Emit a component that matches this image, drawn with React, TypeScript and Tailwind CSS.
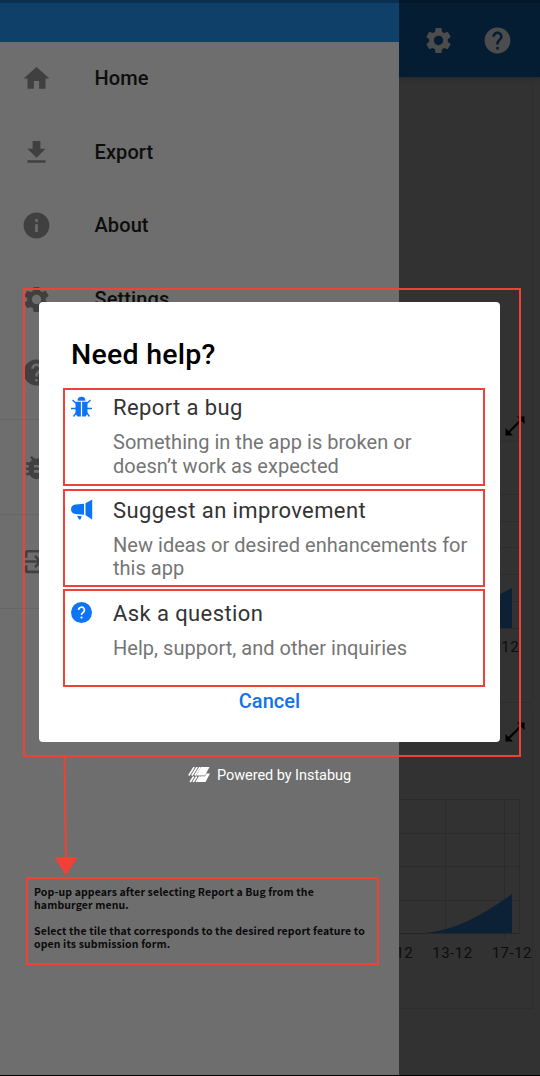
import type { ReactNode } from "react";
import {
  MdHome,
  MdFileDownload,
  MdInfo,
  MdSettings,
  MdHelp,
  MdBugReport,
  MdExitToApp,
} from "react-icons/md";

const menu = [
  { label: "Home", Icon: MdHome },
  { label: "Export", Icon: MdFileDownload },
  { label: "About", Icon: MdInfo },
  { label: "Settings", Icon: MdSettings },
];

function Drawer() {
  return (
    <aside className="flex h-[1075px] w-[399px] shrink-0 flex-col bg-[#6e6e6e]">
      <div className="h-[42px] border-t-[3px] border-[#0b2f4e] bg-[#0f406a]" />
      <nav className="flex flex-col">
        {menu.map(({ label, Icon }) => (
          <div key={label} className="flex h-[73.5px] items-center gap-[42.5px] pl-[21px]">
            <Icon className="size-[31px] shrink-0 text-[#404040]" />
            <span className="pb-px text-[20px] font-medium tracking-[0.1px] text-[#0d0d0d]">{label}</span>
          </div>
        ))}
        <div className="flex h-[73.5px] items-center pl-[21px]">
          <MdHelp className="size-[31px] text-[#404040]" />
        </div>
      </nav>
      <div className="mt-[9.5px] flex h-[95px] items-center border-t border-[#666666] pl-[21px]">
        <MdBugReport className="size-[31px] text-[#404040]" />
      </div>
      <div className="flex h-[95px] items-center border-y border-[#666666] pl-[21px]">
        <MdExitToApp className="size-[31px] text-[#404040]" />
      </div>
    </aside>
  );
}

function ExpandIcon() {
  return (
    <svg viewBox="0 0 20 20" className="size-5 fill-black stroke-black">
      <path d="M3 17 17 3" strokeWidth="2.2" />
      <path d="M12 0.5h7.5v7.5zM0.5 12v7.5H8z" stroke="none" />
    </svg>
  );
}

function Page() {
  return (
    <main className="flex h-[1075px] w-[141px] flex-col overflow-hidden bg-[#323232]">
      <header className="flex h-[77px] shrink-0 items-center gap-7 border-t-[3px] border-[#03172a] bg-[#041d33] pl-6 shadow-[0_2px_4px_#292929]">
        <MdSettings className="size-[31px] text-[#4c4c4c]" />
        <MdHelp className="size-[31px] text-[#4c4c4c]" />
      </header>
      <section className="mr-[7px] h-[626px] shrink-0 border-r border-b border-[#2d2d2d] pt-[339px]">
        <div className="flex h-[24px] items-start justify-end pr-[7px]">
          <ExpandIcon />
        </div>
        <svg viewBox="0 0 121 198" className="block h-[198px] w-[121px]">
          <path d="M0 1H121M0 54.5H121M0 81.5H121M0 107.5H121M0 134.5H121M0 161.5H121" stroke="#2d2d2d" />
          <path d="M60 188V180Q95 157 113 148V188z" fill="#0c2136" />
          <path d="M0 188.5H121" stroke="#282828" />
        </svg>
        <div className="flex justify-end pr-[13px] text-[15px] leading-[18px] tracking-[0.4px] text-[#0d0d0d]">12</div>
      </section>
      <section className="mt-[3px] mr-[7px] h-[303px] shrink-0 border-r border-b border-[#2d2d2d] pt-[16px]">
        <div className="flex justify-end pr-[7px]">
          <ExpandIcon />
        </div>
        <svg viewBox="0 0 121 145" className="mt-[57px] block h-[145px] w-[121px]">
          <path d="M0 .5H121M0 34.5H121M0 67.5H121M0 101.5H121M46.5 0V139M105.5 0V139M120.5 0V134" stroke="#2b2b2b" />
          <path d="M20 134.500C52 132 75 122 113 95V134z" fill="#0c2136" />
          <path d="M0 134.500H121" stroke="#262626" />
        </svg>
        <div className="flex w-[133px] justify-end gap-[19px] text-[15px] leading-[18px] tracking-[0.5px] whitespace-nowrap text-[#0d0d0d]">
          <span>12</span>
          <span>13-12</span>
          <span>17-12</span>
        </div>
      </section>
    </main>
  );
}

function BugIcon() {
  return (
    <svg viewBox="0 0 22 22" className="block size-[22px]" fill="#0d75f5">
      <path d="M6.500 4.800a4 4 0 0 1 8 0z" />
      <path d="M4.500 5.800H9.900V20.500H6.500C5 19 4.500 17.500 4.500 15zM11.100 5.800H16.500V15C16.500 17.500 16 19 14.500 20.500H11.100z" />
      <path d="M1.500 4 5 7.200M19.500 4 16 7.200M0 12.500H5M16 12.500h5M5.500 16.500 2.500 20.500M15.500 16.500l3 4" fill="none" stroke="#0d75f5" strokeWidth="1.400" />
    </svg>
  );
}

function MegaphoneIcon() {
  return (
    <svg viewBox="0 0 22 22" className="block size-[22px]" fill="#0d75f5">
      <path d="M4.500 5.500 13 4.800V15.800L4.500 15C1.500 14.800 0 12.800 0 10.200S1.500 5.700 4.500 5.500z" />
      <path d="M14.500 4.300 21.200.5V20.500L14.500 16.200z" />
      <path d="M6 16.800 10.800 17.200 9.500 20.500H8z" />
    </svg>
  );
}

function QuestionIcon() {
  return (
    <svg viewBox="0 0 22 22" className="block size-[22px]">
      <circle cx="10.500" cy="10.500" r="10.500" fill="#0d75f5" />
      <path d="M7.600 8.100A2.900 2.900 0 1 1 12 10.500C10.900 11.200 10.500 11.700 10.500 13" fill="none" stroke="white" strokeWidth="1.600" />
      <circle cx="10.500" cy="15.500" r="1.100" fill="white" />
    </svg>
  );
}

interface OptionProps {
  icon: ReactNode;
  title: string;
  inset: string;
  children: ReactNode;
}

function Option({ icon, title, inset, children }: OptionProps) {
  return (
    <button className={`flex h-[98px] w-[422px] gap-[20px] border-2 border-[#f04037] pl-[6px] text-left ${inset}`}>
      <span className="w-[22px] shrink-0">{icon}</span>
      <span className="flex flex-col gap-[11px] whitespace-nowrap">
        <span className="text-[22px] leading-[24px] tracking-[0.4px] text-[#333333]">{title}</span>
        <span className="text-[20px] leading-[23.5px] tracking-[0.03px] text-[#757575]">{children}</span>
      </span>
    </button>
  );
}

export default function App() {
  return (
    <div className="relative flex h-[1076px] w-[540px] overflow-hidden bg-black font-['Roboto',sans-serif]">
      <Drawer />
      <Page />

      <div role="dialog" className="absolute top-[302px] left-[39px] flex h-[440px] w-[461px] flex-col rounded-[4px] bg-white">
        <h1 className="pt-[37px] pl-[32px] text-[28.500px] leading-[32px] font-medium tracking-[0.25px] text-black">Need help?</h1>
        <div className="mt-[17px] ml-[24px] flex flex-col gap-[2.500px]">
          <Option icon={<BugIcon />} title="Report a bug" inset="pt-[6px]">
            Something in the app is broken or
            <br />
            doesn’t work as expected
          </Option>
          <Option icon={<MegaphoneIcon />} title="Suggest an improvement" inset="pt-[8px]">
            New ideas or desired enhancements for
            <br />
            this app
          </Option>
          <Option icon={<QuestionIcon />} title="Ask a question" inset="pt-[11px]">
            Help, support, and other inquiries
          </Option>
        </div>
        <button className="mt-[2px] text-center text-[20px] leading-[24px] font-medium tracking-[0.05px] text-[#1373e6]">Cancel</button>
      </div>

      <div className="absolute top-[288px] left-[23px] h-[469px] w-[498px] border-2 border-[#f04037]" />

      <div className="absolute top-[766px] left-[188px] flex h-[18px] items-center gap-[7px] text-white">
        <svg viewBox="0 0 22 16" className="h-4 w-[22px]" fill="white">
          <path d="M13 0H21.500L17 8.500H8z" />
          <path d="M.800 8.500 6.200 0M3.800 8.500 9.200 0M6.800 8.500 12 0" stroke="white" strokeWidth="1.600" />
          <path d="M12.500 9.300H17L18.500 6.500H22L17.500 15H9z" />
          <path d="M2.200 15 5.700 9.500M5.200 15 8.700 9.500M8.200 15l3.500-5.500" stroke="white" strokeWidth="1.600" />
        </svg>
        <span className="pt-[2px] text-[14.500px] tracking-[-0.050px] whitespace-nowrap">Powered by Instabug</span>
      </div>

      <svg viewBox="0 0 24 120" className="absolute top-[757px] left-[54px] h-[120px] w-6" fill="#f04037">
        <path d="M10.500 0 12 102" stroke="#f04037" strokeWidth="2" />
        <path d="M.500 100H23.500L12 119z" />
      </svg>

      <div className="absolute top-[877px] left-[26px] h-[88px] w-[353px] border-2 border-[#f04037] pt-[6px] pl-[6px] font-['Noto_Sans_CJK_SC',sans-serif] text-[10.500px] leading-[13px] font-bold tracking-[0.115px] whitespace-nowrap text-[#0a0a0a]">
        <p>Pop-up appears after selecting Report a Bug from the</p>
        <p>hamburger menu.</p>
        <p className="mt-[13px]">Select the tile that corresponds to the desired report feature to</p>
        <p>open its submission form.</p>
      </div>
    </div>
  );
}
